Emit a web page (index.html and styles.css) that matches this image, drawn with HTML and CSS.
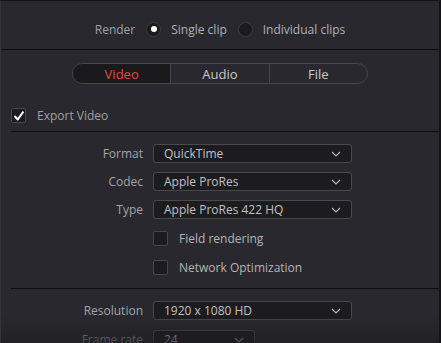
FILE: index.html
```html
<!DOCTYPE html>
<html lang="en">
<head>
    <meta charset="UTF-8">
    <title>Render Settings</title>
    <link rel="stylesheet" href="styles.css">
</head>
<body>
    <div class="panel">
        <div class="render-row">
            <span class="muted">Render</span>
            <span class="radio on"></span>
            <span>Single clip</span>
            <span class="radio"></span>
            <span>Individual clips</span>
        </div>
        <div class="divider full"></div>

        <div class="tabs">
            <div class="tab active">Video</div>
            <div class="tab">Audio</div>
            <div class="tab">File</div>
        </div>

        <div class="export-row">
            <span class="checkbox checked">
                <svg width="12" height="12" viewBox="0 0 12 12"><path d="M2 6.5 L4.8 9.5 L10 2.2" fill="none" stroke="#fff" stroke-width="2" stroke-linecap="round" stroke-linejoin="round"/></svg>
            </span>
            <span class="muted">Export Video</span>
        </div>
        <div class="divider"></div>

        <div class="form">
            <div class="row">
                <label>Format</label>
                <div class="select"><span>QuickTime</span><svg class="chev" width="10" height="6" viewBox="0 0 10 6"><path d="M1 1 L5 5 L9 1" fill="none" stroke="#b4b4b8" stroke-width="1.2"/></svg></div>
            </div>
            <div class="row">
                <label>Codec</label>
                <div class="select"><span>Apple ProRes</span><svg class="chev" width="10" height="6" viewBox="0 0 10 6"><path d="M1 1 L5 5 L9 1" fill="none" stroke="#b4b4b8" stroke-width="1.2"/></svg></div>
            </div>
            <div class="row">
                <label>Type</label>
                <div class="select"><span>Apple ProRes 422 HQ</span><svg class="chev" width="10" height="6" viewBox="0 0 10 6"><path d="M1 1 L5 5 L9 1" fill="none" stroke="#b4b4b8" stroke-width="1.2"/></svg></div>
            </div>
            <div class="row check-row">
                <label></label>
                <div class="check-item"><span class="checkbox"></span><span>Field rendering</span></div>
            </div>
            <div class="row check-row">
                <label></label>
                <div class="check-item"><span class="checkbox"></span><span>Network Optimization</span></div>
            </div>
        </div>
        <div class="divider gap"></div>

        <div class="form lower">
            <div class="row">
                <label>Resolution</label>
                <div class="select"><span>1920 x 1080 HD</span><svg class="chev" width="10" height="6" viewBox="0 0 10 6"><path d="M1 1 L5 5 L9 1" fill="none" stroke="#b4b4b8" stroke-width="1.2"/></svg></div>
            </div>
            <div class="row">
                <label>Frame rate</label>
                <div class="select small"><span>24</span><svg class="chev" width="10" height="6" viewBox="0 0 10 6"><path d="M1 1 L5 5 L9 1" fill="none" stroke="#b4b4b8" stroke-width="1.2"/></svg></div>
            </div>
        </div>
        <div class="fade"></div>
    </div>
</body>
</html>
```

FILE: styles.css
```css
body {
    margin: 0;
    background: #28282e;
    font-family: "Open Sans", "Noto Sans", sans-serif;
    font-size: 12px;
    color: #b0b0b4;
    width: 441px;
    height: 343px;
    overflow: hidden;
}
.panel {
    position: relative;
    height: 342px;
    border-top: 1px solid #131315;
    border-left: 1px solid #34343a;
    border-right: 2px solid #141416;
    overflow: hidden;
}
.muted { color: #a0a0a4; }

.render-row {
    height: 40px;
    padding-top: 8px;
    display: flex;
    justify-content: center;
    align-items: center;
    gap: 10px;
}
.radio {
    width: 13px;
    height: 13px;
    border-radius: 50%;
    background: #1b1b1e;
    border: 1px solid #3c3c42;
    display: flex;
    justify-content: center;
    align-items: center;
    margin-left: 1px;
}
.radio.on::after {
    content: "";
    width: 6px;
    height: 6px;
    border-radius: 50%;
    background: #fff;
}

.divider {
    height: 1px;
    background: #0f0f11;
    margin-left: 10px;
}
.divider.full { margin-left: 0; }
.divider.gap { margin-top: 11px; }

.tabs {
    margin: 13px 0 0 71px;
    width: 294px;
    height: 19px;
    border: 1px solid #46464c;
    border-radius: 11px;
    display: flex;
    overflow: hidden;
    font-size: 13px;
    color: #c8c8cc;
}
.tab {
    flex: 1;
    display: flex;
    justify-content: center;
    align-items: center;
    border-left: 1px solid #46464c;
}
.tab:first-child { border-left: none; }
.tab.active {
    background: #1a1a1d;
    color: #e8493b;
}

.export-row {
    display: flex;
    align-items: center;
    gap: 11px;
    margin: 24px 0 8px 10px;
    height: 15px;
}
.checkbox {
    width: 13px;
    height: 13px;
    border: 1px solid #46464c;
    border-radius: 2px;
    background: #1c1c1f;
    display: flex;
    justify-content: center;
    align-items: center;
    flex-shrink: 0;
}

.form {
    display: flex;
    flex-direction: column;
    gap: 9px;
    margin-top: 12px;
}
.form.lower {
    margin-top: 12px;
    gap: 10px;
}
.row {
    display: grid;
    grid-template-columns: 142px 199px;
    column-gap: 10px;
    align-items: center;
    height: 19px;
}
.row label {
    text-align: right;
    color: #a4a4a8;
}
.check-row { height: 20px; }
.check-item {
    display: flex;
    align-items: center;
    gap: 11px;
    color: #b4b4b8;
}
.select {
    height: 17px;
    border: 1px solid #48484e;
    border-radius: 3px;
    background: #1c1c1f;
    display: flex;
    align-items: center;
    justify-content: space-between;
    padding: 0 10px 0 10px;
    color: #c0c0c4;
}
.select.small {
    width: 80px;
}
.chev { display: block; }

.fade {
    position: absolute;
    left: 0;
    right: 0;
    bottom: 0;
    height: 28px;
    background: linear-gradient(rgba(40, 40, 46, 0), rgba(30, 30, 34, 0.7));
}
```
